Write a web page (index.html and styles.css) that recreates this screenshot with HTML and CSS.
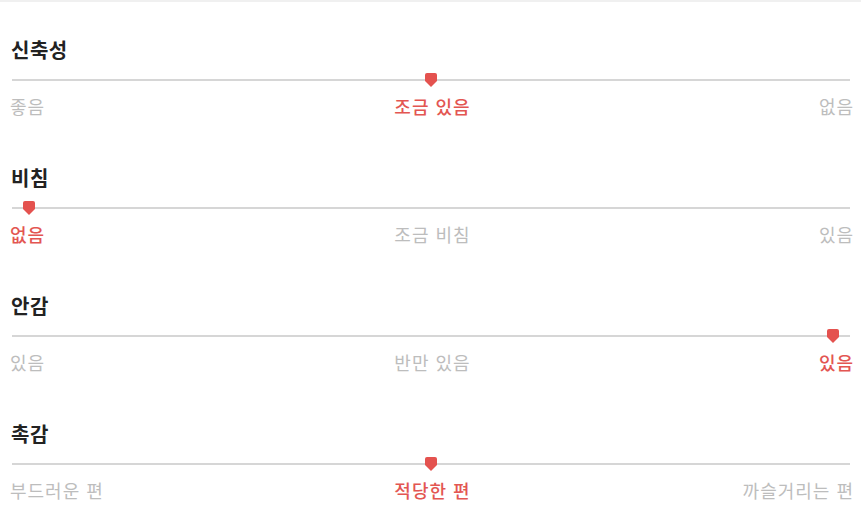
FILE: index.html
```html
<!DOCTYPE html>
<html lang="ko">
<head>
    <meta charset="UTF-8">
    <meta name="viewport" content="width=device-width, initial-scale=1.0">
    <title>사이즈 정보</title>
    <link rel="stylesheet" href="styles.css">
</head>
<body>
    <div class="container">
        <div class="item">
            <h3>신축성</h3>
            <div class="track">
                <svg class="pin" style="left: 50%" width="12" height="14" viewBox="0 0 12 14"><path d="M2 0H10Q12 0 12 2V8L6 14L0 8V2Q0 0 2 0Z"/></svg>
            </div>
            <div class="labels">
                <span>좋음</span>
                <span class="on">조금 있음</span>
                <span>없음</span>
            </div>
        </div>
        <div class="item">
            <h3>비침</h3>
            <div class="track">
                <svg class="pin" style="left: 2%" width="12" height="14" viewBox="0 0 12 14"><path d="M2 0H10Q12 0 12 2V8L6 14L0 8V2Q0 0 2 0Z"/></svg>
            </div>
            <div class="labels">
                <span class="on">없음</span>
                <span>조금 비침</span>
                <span>있음</span>
            </div>
        </div>
        <div class="item">
            <h3>안감</h3>
            <div class="track">
                <svg class="pin" style="left: 98%" width="12" height="14" viewBox="0 0 12 14"><path d="M2 0H10Q12 0 12 2V8L6 14L0 8V2Q0 0 2 0Z"/></svg>
            </div>
            <div class="labels">
                <span>있음</span>
                <span>반만 있음</span>
                <span class="on">있음</span>
            </div>
        </div>
        <div class="item">
            <h3>촉감</h3>
            <div class="track">
                <svg class="pin" style="left: 50%" width="12" height="14" viewBox="0 0 12 14"><path d="M2 0H10Q12 0 12 2V8L6 14L0 8V2Q0 0 2 0Z"/></svg>
            </div>
            <div class="labels">
                <span>부드러운 편</span>
                <span class="on">적당한 편</span>
                <span>까슬거리는 편</span>
            </div>
        </div>
    </div>
</body>
</html>
```

FILE: styles.css
```css
body {
    margin: 0;
    background: #fff;
    border-top: 2px solid #f0f0f0;
    font-family: "Noto Sans CJK KR", "Noto Sans", sans-serif;
}
.container {
    padding: 36px 8px 0 10px;
}
.item {
    margin-bottom: 48px;
}
h3 {
    margin: 0 0 0 1px;
    font-size: 20px;
    line-height: 24px;
    font-weight: 700;
    letter-spacing: 0.5px;
    color: #222;
}
.track {
    position: relative;
    height: 20px;
    margin: 8px 3px 0 2px;
}
.track::before {
    content: "";
    position: absolute;
    left: 0;
    right: 0;
    top: 9px;
    height: 2px;
    background: #d6d6d6;
}
.pin {
    position: absolute;
    top: 3px;
    margin-left: -6px;
    fill: #e4524f;
}
.labels {
    display: grid;
    grid-template-columns: 1fr auto 1fr;
    margin-top: 4px;
    font-size: 18px;
    line-height: 24px;
    letter-spacing: 1px;
    color: #bdbdbd;
}
.labels span:nth-child(2) {
    margin-left: 2px;
}
.labels span:last-child {
    justify-self: end;
    margin-right: -1px;
}
.labels .on {
    color: #e35652;
    font-weight: 500;
}
```
